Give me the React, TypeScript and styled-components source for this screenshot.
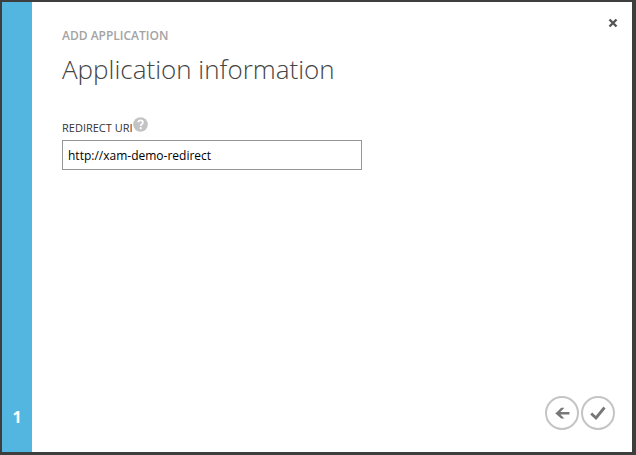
import React, { useState } from "react";
import styled, { createGlobalStyle } from "styled-components";

const GlobalStyle = createGlobalStyle`
  *, *::before, *::after { box-sizing: border-box; }
  body {
    margin: 0;
    background: #3e3e3e;
    font-family: "Open Sans", "Noto Sans", sans-serif;
    color: #333;
  }
  h1, p { margin: 0; }
  button { font: inherit; cursor: pointer; }
`;

const Backdrop = styled.div`
  display: flex;
  min-height: 100vh;
  padding: 2px 4px 3px 2px;
`;

const Dialog = styled.main`
  display: flex;
  flex: 1;
  background: #fff;
`;

const StepRail = styled.aside`
  display: flex;
  flex-direction: column;
  justify-content: flex-end;
  align-items: center;
  width: 30px;
  padding-bottom: 24px;
  background: #52b6e1;
`;

const StepNumber = styled.span`
  color: #fff;
  font-family: "Open Sans", sans-serif;
  font-size: 16px;
  font-weight: 700;
  line-height: 22px;
`;

const Content = styled.div`
  display: flex;
  flex: 1;
  flex-direction: column;
  padding: 14px 14px 22px 30px;
`;

const Header = styled.header`
  display: flex;
  justify-content: space-between;
  align-items: flex-start;
`;

const Titles = styled.div`
  padding-top: 12px;
`;

const Eyebrow = styled.p`
  color: #a3a3a3;
  font-size: 12px;
  font-weight: 600;
  line-height: 16px;
`;

const Title = styled.h1`
  padding-top: 5px;
  color: #444;
  font-size: 26px;
  font-weight: 300;
  line-height: 40px;
`;

const CloseButton = styled.button`
  display: flex;
  padding: 0;
  border: 0;
  background: none;
`;

const Form = styled.form`
  display: flex;
  flex: 1;
  flex-direction: column;
  padding-top: 28px;
`;

const LabelRow = styled.div`
  display: flex;
  align-items: flex-start;
  height: 23px;
`;

const FieldLabel = styled.label`
  padding-top: 3px;
  font-size: 11px;
  line-height: 16px;
`;

const HelpButton = styled.button`
  display: flex;
  padding: 0;
  border: 0;
  border-radius: 50%;
  background: none;
`;

const TextField = styled.input`
  width: 300px;
  max-width: 100%;
  height: 30px;
  padding: 0 5px;
  border: 1px solid #969696;
  outline: none;
  color: #000;
  font-family: "Open Sans", sans-serif;
  font-size: 12px;
`;

const Actions = styled.footer`
  display: flex;
  justify-content: flex-end;
  gap: 2px;
  margin-top: auto;
  padding-right: 3px;
`;

const RoundButton = styled.button`
  display: flex;
  align-items: center;
  justify-content: center;
  width: 34px;
  height: 34px;
  padding: 0;
  border: 2px solid #c4c4c4;
  border-radius: 50%;
  background: #fff;
`;

const CloseIcon = () => (
  <svg width="10" height="14" viewBox="0 0 10 14" aria-hidden="true">
    <path d="M1.5 3.5 8.5 10.5M8.5 3.5 1.5 10.5" stroke="#555" strokeWidth="2.4" />
  </svg>
);

const HelpIcon = () => (
  <svg width="15" height="15" viewBox="0 0 15 15" aria-hidden="true">
    <circle cx="7.5" cy="7.5" r="7.3" fill="#c3c3c3" />
    <path d="M5.2 5.4C5.3 4 6.2 3.4 7.6 3.4s2.3.8 2.3 2c0 1.7-2.2 1.7-2.2 3.5" fill="none" stroke="#fff" strokeWidth="1.7" />
    <circle cx="7.7" cy="11.2" r="1.1" fill="#fff" />
  </svg>
);

const BackIcon = () => (
  <svg width="16" height="14" viewBox="0 0 16 14" aria-hidden="true">
    <path d="M3 5.9 7.2 1.8H10.4L6.4 5.9H15.4V8.5H6.4L10.4 12.6H7.2L1.2 7.2Z" fill="#777" />
  </svg>
);

const CheckIcon = () => (
  <svg width="16" height="14" viewBox="0 0 16 14" aria-hidden="true">
    <path d="M1.2 7.5 6 12 14.5 1.5" fill="none" stroke="#777" strokeWidth="2.8" />
  </svg>
);

export default function App() {
  const [uri, setUri] = useState("http://xam-demo-redirect");

  return (
    <>
      <GlobalStyle />
      <Backdrop>
        <Dialog>
          <StepRail>
            <StepNumber>1</StepNumber>
          </StepRail>
          <Content>
            <Header>
              <Titles>
                <Eyebrow>ADD APPLICATION</Eyebrow>
                <Title>Application information</Title>
              </Titles>
              <CloseButton type="button" aria-label="Close">
                <CloseIcon />
              </CloseButton>
            </Header>
            <Form onSubmit={(event) => event.preventDefault()}>
              <LabelRow>
                <FieldLabel htmlFor="redirect-uri">REDIRECT URI</FieldLabel>
                <HelpButton type="button" aria-label="Help">
                  <HelpIcon />
                </HelpButton>
              </LabelRow>
              <TextField
                id="redirect-uri"
                type="text"
                value={uri}
                onChange={(event) => setUri(event.target.value)}
              />
              <Actions>
                <RoundButton type="button" aria-label="Back">
                  <BackIcon />
                </RoundButton>
                <RoundButton type="submit" aria-label="Complete">
                  <CheckIcon />
                </RoundButton>
              </Actions>
            </Form>
          </Content>
        </Dialog>
      </Backdrop>
    </>
  );
}
